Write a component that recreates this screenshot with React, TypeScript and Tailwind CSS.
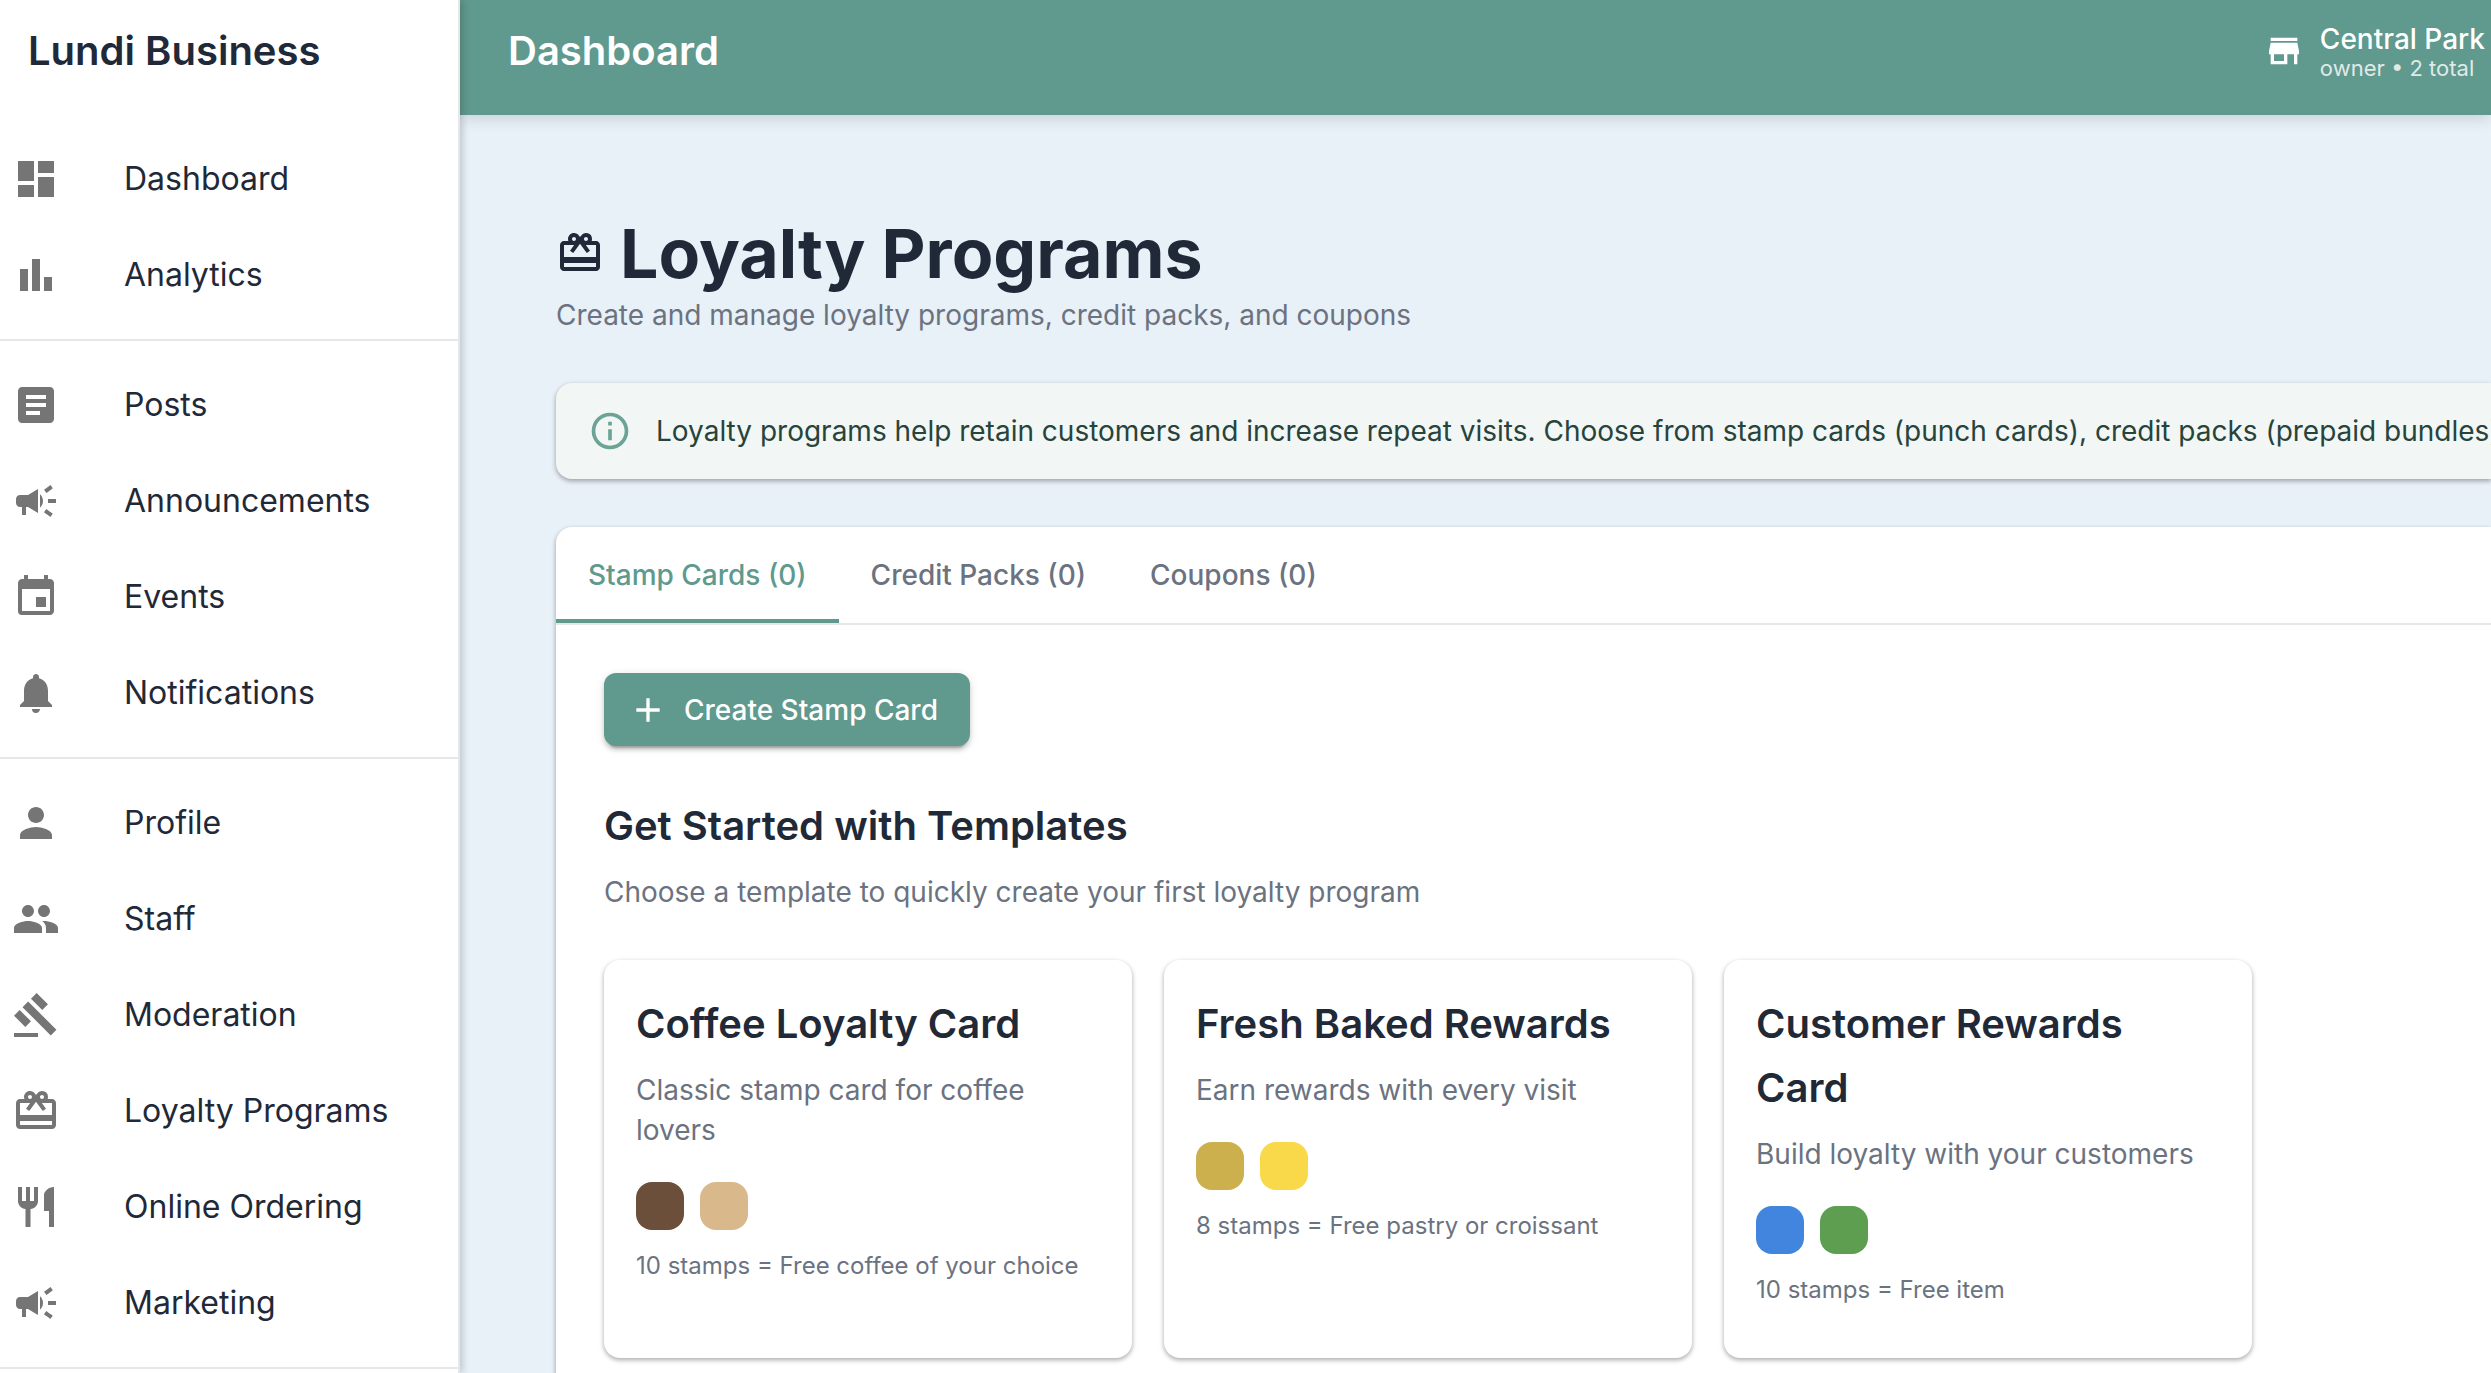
import { useState } from "react";
import type { IconType } from "react-icons";
import {
  MdAdd,
  MdArticle,
  MdCampaign,
  MdCardGiftcard,
  MdDashboard,
  MdEvent,
  MdGavel,
  MdNotifications,
  MdPeople,
  MdPerson,
  MdRestaurant,
  MdStore,
} from "react-icons/md";

function BarChartIcon({ className }: { className?: string }) {
  return (
    <svg className={className} viewBox="0 0 24 24" fill="currentColor">
      <path d="M4 9h4v11H4zM16 13h4v7h-4zM10 4h4v16h-4z" />
    </svg>
  );
}

function InfoIcon({ className }: { className?: string }) {
  return (
    <svg className={className} viewBox="0 0 24 24" fill="currentColor">
      <path d="M11 9h2V7h-2M12 20c-4.41 0-8-3.59-8-8s3.59-8 8-8 8 3.59 8 8-3.59 8-8 8m0-18A10 10 0 0 0 2 12a10 10 0 0 0 10 10 10 10 0 0 0 10-10A10 10 0 0 0 12 2m-1 15h2v-6h-2v6z" />
    </svg>
  );
}

type NavItem = { label: string; icon: IconType | typeof BarChartIcon };

const navGroups: NavItem[][] = [
  [
    { label: "Dashboard", icon: MdDashboard },
    { label: "Analytics", icon: BarChartIcon },
  ],
  [
    { label: "Posts", icon: MdArticle },
    { label: "Announcements", icon: MdCampaign },
    { label: "Events", icon: MdEvent },
    { label: "Notifications", icon: MdNotifications },
  ],
  [
    { label: "Profile", icon: MdPerson },
    { label: "Staff", icon: MdPeople },
    { label: "Moderation", icon: MdGavel },
    { label: "Loyalty Programs", icon: MdCardGiftcard },
    { label: "Online Ordering", icon: MdRestaurant },
    { label: "Marketing", icon: MdCampaign },
  ],
];

const tabs = ["Stamp Cards (0)", "Credit Packs (0)", "Coupons (0)"];

const templates = [
  {
    name: "Coffee Loyalty Card",
    description: "Classic stamp card for coffee lovers",
    colors: ["bg-[#6b4f3a]", "bg-[#d9b98c]"],
    reward: "10 stamps = Free coffee of your choice",
  },
  {
    name: "Fresh Baked Rewards",
    description: "Earn rewards with every visit",
    colors: ["bg-[#ccb04e]", "bg-[#f9d84a]"],
    reward: "8 stamps = Free pastry or croissant",
  },
  {
    name: "Customer Rewards Card",
    description: "Build loyalty with your customers",
    colors: ["bg-[#4285de]", "bg-[#5d9e50]"],
    reward: "10 stamps = Free item",
  },
];

function Sidebar() {
  return (
    <aside className="z-10 w-[460px] shrink-0 overflow-hidden border-r-2 border-gray-200 bg-white shadow-[2px_0_8px_rgba(0,0,0,0.2)]">
      <div className="flex h-[115px] items-start px-7 pt-[19px]">
        <span className="text-[40px]/[64px] font-semibold">Lundi Business</span>
      </div>
      <nav className="pt-4">
        {navGroups.map((group, i) => (
          <ul key={i} className="mb-4 border-b-2 border-gray-200 pb-4">
            {group.map(({ label, icon: Icon }) => (
              <li key={label}>
                <a href="#" className="flex h-24 items-center gap-16 pl-3 text-[32px]/[48px] hover:bg-gray-50">
                  <Icon className="size-12 shrink-0 text-[#757575]" />
                  {label}
                </a>
              </li>
            ))}
          </ul>
        ))}
      </nav>
    </aside>
  );
}

function Header() {
  return (
    <header className="flex h-[115px] items-start justify-between bg-[#60998d] pt-[19px] pr-1.5 pl-12 text-white shadow-[0_2px_16px_rgba(0,0,0,0.16)]">
      <span className="text-[40px]/[64px] font-semibold">Dashboard</span>
      <button className="flex h-16 items-center gap-4 text-left">
        <MdStore className="size-10" />
        <span className="flex flex-col">
          <span className="text-[28px]/[34px] font-medium">Central Park</span>
          <span className="text-[22px]/[24px] opacity-80">owner • 2 total</span>
        </span>
      </button>
    </header>
  );
}

function TemplateCard({ template }: { template: (typeof templates)[number] }) {
  return (
    <article className="rounded-2xl bg-white px-8 pt-8 pb-12 shadow-[0_2px_6px_rgba(0,0,0,0.12),0_2px_4px_rgba(0,0,0,0.24)]">
      <h3 className="mb-[14px] text-[40px]/[64px] font-semibold">{template.name}</h3>
      <p className="mb-8 text-[28px]/[40px] text-[#6b7280]">{template.description}</p>
      <div className="mb-4 flex gap-4">
        {template.colors.map((color) => (
          <div key={color} className={`size-12 rounded-2xl ${color}`} />
        ))}
      </div>
      <p className="text-[24px]/[40px] text-[#6b7280]">{template.reward}</p>
    </article>
  );
}

export default function App() {
  const [activeTab, setActiveTab] = useState(0);

  return (
    <div className="flex h-screen overflow-hidden bg-[#e8f0f8] font-[Inter,sans-serif] text-[#1f2937]">
      <Sidebar />
      <div className="min-w-0 flex-1">
        <Header />
        <main className="pt-24 pl-24">
          <h1 className="flex items-center gap-4 text-[68px]/[84px] font-bold">
            <MdCardGiftcard className="size-12" />
            Loyalty Programs
          </h1>
          <p className="text-[28px]/[40px] text-[#6b7280]">
            Create and manage loyalty programs, credit packs, and coupons
          </p>

          <div className="mt-12 flex h-24 items-center gap-6 rounded-l-2xl bg-[#f2f6f5] pl-8 whitespace-nowrap text-[#26443b] shadow-[0_2px_6px_rgba(0,0,0,0.12),0_2px_4px_rgba(0,0,0,0.24)]">
            <InfoIcon className="size-11 shrink-0 text-[#6ba396]" />
            <p className="text-[28px]/[40px]">
              Loyalty programs help retain customers and increase repeat visits. Choose from stamp cards (punch cards), credit packs (prepaid bundles)
            </p>
          </div>

          <section className="mt-12 rounded-l-2xl bg-white shadow-[0_2px_6px_rgba(0,0,0,0.12),0_2px_4px_rgba(0,0,0,0.24)]">
            <div role="tablist" className="flex border-b-2 border-gray-200">
              {tabs.map((tab, i) => (
                <button
                  key={tab}
                  role="tab"
                  aria-selected={activeTab === i}
                  onClick={() => setActiveTab(i)}
                  className={`h-24 border-b-4 px-8 pt-1 text-[28px]/[36px] font-medium ${
                    activeTab === i
                      ? "border-[#60998d] text-[#60998d]"
                      : "border-transparent text-[#6b7280]"
                  }`}
                >
                  {tab}
                </button>
              ))}
            </div>

            <div className="p-12">
              <button className="flex h-[73px] items-center gap-4 rounded-xl bg-[#60998d] pr-8 pl-6 text-[28px]/[48px] font-medium text-white shadow-[0_6px_2px_-4px_rgba(0,0,0,0.2),0_4px_4px_rgba(0,0,0,0.14),0_2px_10px_rgba(0,0,0,0.12)]">
                <MdAdd className="size-10" />
                Create Stamp Card
              </button>

              <h2 className="mt-12 mb-[14px] text-[40px]/[64px] font-semibold">Get Started with Templates</h2>
              <p className="mb-12 text-[28px]/[40px] text-[#6b7280]">
                Choose a template to quickly create your first loyalty program
              </p>

              <div className="grid max-w-[1648px] grid-cols-3 gap-8">
                {templates.map((template) => (
                  <TemplateCard key={template.name} template={template} />
                ))}
              </div>
            </div>
          </section>
        </main>
      </div>
    </div>
  );
}
